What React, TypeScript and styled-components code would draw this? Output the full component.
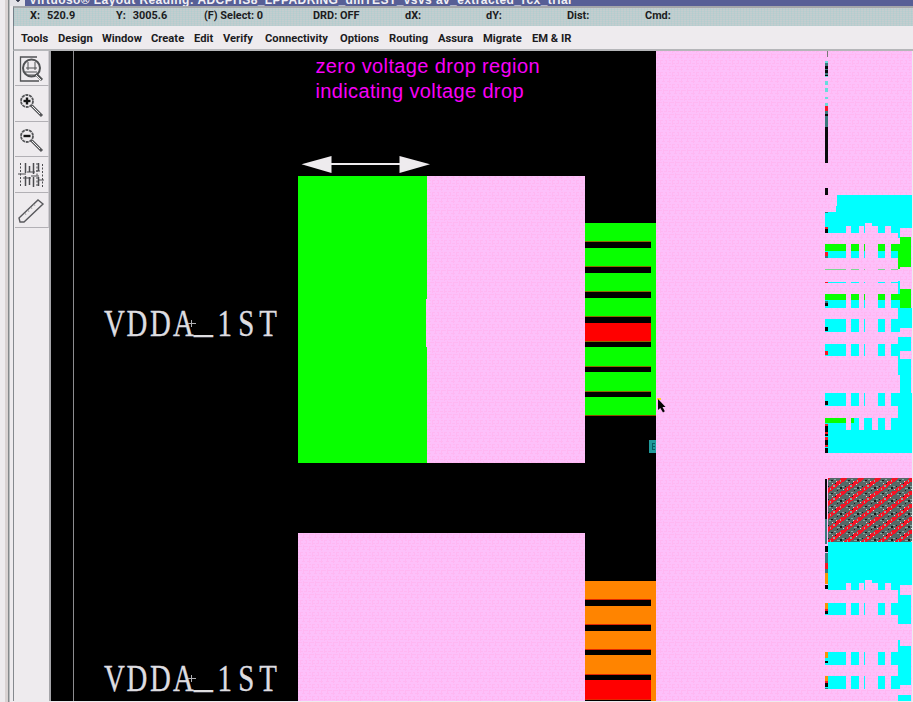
import React from 'react';
import styled, { createGlobalStyle } from 'styled-components';

const GlobalStyle = createGlobalStyle`
  body { margin: 0; background: #eeebee; overflow: hidden; }
  * { box-sizing: border-box; }
`;

const Frame = styled.div`
  display: grid;
  grid-template-columns: 5px 5px 1fr;
  width: 913px;
  height: 702px;
  background: #eeebee;
  font-family: Roboto, 'Liberation Sans', Arial, sans-serif;
  color: #1c1c1e;
`;

const DesktopEdge = styled.div`
  background: #eeebee;
`;

const WindowBorder = styled.div`
  background: linear-gradient(90deg, #d9d2d2 0 3px, #85898c 3px 4px, #b9bcbe 4px 5px);
`;

const Window = styled.div`
  display: flex;
  flex-direction: column;
  min-width: 0;
  height: 701px;
`;

const TitleBar = styled.div`
  display: flex;
  align-items: flex-end;
  height: 6px;
  overflow: hidden;
  background: #575f96;
  color: #f1f0f5;
`;

const WindowMenuButton = styled.div`
  width: 15px;
  height: 6px;
  background: radial-gradient(circle at 8px 0, #33374a 0 1.5px, #e2e1e7 2px);
`;

const Title = styled.div`
  margin-left: 4px;
  font-family: 'Liberation Sans', Arial, sans-serif;
  font-size: 12px;
  font-weight: 700;
  line-height: 12px;
  letter-spacing: 0.42px;
  white-space: pre;
`;

const StatusBar = styled.div`
  display: flex;
  height: 20px;
  padding-left: 16px;
  margin-left: 3px;
  border-top: 2px solid #a4a7aa;
  border-left: 1px solid #77808a;
  background:
    repeating-linear-gradient(90deg, rgba(150, 205, 205, 0.25) 0 1px, transparent 1px 3px),
    repeating-linear-gradient(0deg, rgba(150, 205, 205, 0.2) 0 1px, transparent 1px 2px),
    #c5cdcf;
`;

const StatusField = styled.div<{ $width: number }>`
  display: flex;
  gap: 7px;
  width: ${(p) => p.$width}px;
  flex: none;
  font-size: 10.9px;
  font-weight: 700;
  line-height: 16px;
  white-space: pre;
`;

const MenuBar = styled.div`
  display: flex;
  height: 25px;
  margin-left: 3px;
  padding-left: 7px;
  border-left: 1px solid #85898e;
  border-bottom: 2px solid #b5b6b9;
`;

const MenuItem = styled.div<{ $width: number }>`
  width: ${(p) => p.$width}px;
  flex: none;
  font-size: 11.2px;
  font-weight: 700;
  line-height: 25px;
  white-space: nowrap;
`;

const Workspace = styled.div`
  display: flex;
  flex: 1;
  min-height: 0;
`;

const Toolbar = styled.div`
  display: flex;
  flex-direction: column;
  width: 38px;
  margin-left: 3px;
  border-left: 1px solid #85898e;
  border-right: 2px solid #a5a5a9;
`;

const ToolButton = styled.div`
  display: flex;
  align-items: center;
  justify-content: center;
  height: 35.4px;
  margin-left: 1px;
  padding-right: 2px;
  padding-top: 2px;
  border-bottom: 1px solid #b2b0b5;
  border-right: 1px solid #cfccd1;
`;

const Canvas = styled.svg`
  display: block;
  width: 861px;
  height: 650px;
`;

const Caption = styled.text`
  font: 20px 'Liberation Sans', Arial, sans-serif;
  fill: #f800f8;
`;

const NetLabel = styled.text`
  font: 37px 'Liberation Serif', 'Times New Roman', serif;
  fill: #dedde0;
  stroke: #dedde0;
  stroke-width: 0.35px;
`;

const PINK = 'url(#metal)';
const CYAN = '#00ffff';
const GREEN = '#08ff00';

const status: { parts: string[]; width: number }[] = [
  { parts: ['X:', '520.9'], width: 86 },
  { parts: ['Y:', '3005.6'], width: 88 },
  { parts: ['(F) Select: 0'], width: 109 },
  { parts: ['DRD: OFF'], width: 92 },
  { parts: ['dX:'], width: 81 },
  { parts: ['dY:'], width: 81 },
  { parts: ['Dist:'], width: 78 },
  { parts: ['Cmd:'], width: 80 },
];

const menus: [string, number][] = [
  ['Tools', 37], ['Design', 44], ['Window', 49], ['Create', 43], ['Edit', 29], ['Verify', 42],
  ['Connectivity', 75], ['Options', 49], ['Routing', 49], ['Assura', 45], ['Migrate', 49], ['EM & IR', 60],
];

type Box = [number, number, number, number];

const Boxes = ({ items, fill }: { items: Box[]; fill: string }) => (
  <g fill={fill}>
    {items.map(([x1, y1, x2, y2], i) => (
      <rect key={i} x={x1} y={y1} width={x2 - x1} height={y2 - y1} />
    ))}
  </g>
);

const rowColumns: [number, number][] = [[825, 846], [851, 859], [864, 865], [878, 885], [891, 898]];
const row = (y1: number, y2: number): Box[] => rowColumns.map(([a, b]) => [a, y1, b, y2]);

const Comb = ({ y }: { y: number }) => (
  <Boxes
    fill={PINK}
    items={[
      [846, y - 7, 851, y], [859, y - 7, 864, y], [865, y - 10, 872, y], [872, y - 7, 878, y],
      [885, y - 7, 891, y], [900, y - 5, 912, y + 4],
    ]}
  />
);

const NetName = ({ y }: { y: number }) => (
  <g>
    <NetLabel transform={`translate(104 ${y}) scale(.78 1)`}>
      <tspan x="0">V</tspan>
      <tspan x="29">D</tspan>
      <tspan x="59">D</tspan>
      <tspan x="88.5">A</tspan>
      <tspan x="115.5" dy="-4" textLength="24" lengthAdjust="spacingAndGlyphs">_</tspan>
      <tspan x="145.5" dy="4">1</tspan>
      <tspan x="172">S</tspan>
      <tspan x="199">T</tspan>
    </NetLabel>
    <path d={`M188 ${y - 12.5}h8M191.5 ${y - 16}v7`} stroke="#b0b0b4" fill="none" />
  </g>
);

const ViaStack = ({ y, fill, edge, bars, bottom }: { y: number; fill: string; edge: string; bars: number[]; bottom: number }) => (
  <g>
    <rect x="585" y={y} width="71" height={bottom - y} fill={fill} />
    <rect x="585" y={y + 99} width="66" height="20" fill="#ff0000" />
    {bars.map((b) => (
      <g key={b}>
        <rect x="585" y={b - 1} width="66" height="1" fill={edge} />
        <rect x="585" y={b} width="66" height="5.5" fill="#000" />
      </g>
    ))}
  </g>
);

const LayoutCanvas = () => (
  <Canvas viewBox="51 51 861 650" shapeRendering="crispEdges">
    <defs>
      <pattern id="metal" width="12" height="12" patternUnits="userSpaceOnUse">
        <rect width="12" height="12" fill="#fdc0fa" />
        <path
          d="M0 .5h3M5 .5h2M9 .5h2M1 3.5h2M4 3.5h3M8 3.5h3M0 6.5h2M4 6.5h4M10 6.5h2M2 9.5h3M7 9.5h4M.5 1v4M3.5 5v4M6.5 0v3M9.5 6v5"
          stroke="#ffb5f0"
          strokeOpacity=".8"
        />
      </pattern>
      <pattern id="hatch" width="17" height="13" patternUnits="userSpaceOnUse" x="828" y="478">
        <rect width="17" height="13" fill="#566866" />
        <path d="M-17 13L0 0M0 13L17 0M17 13L34 0M-17 26L17 0M0 0L17 -13" stroke="#f41426" strokeWidth="3.8" />
        <path d="M1 3h2v1h-2zM5 7h2v2h-2zM9 10h3v1h-3zM12 2h1v2h-1zM14 8h2v1h-2zM6 1h2v1h-2zM2 10h1v2h-1z" fill="#80aaa2" />
        <path d="M4 5h1v1h-1zM11 6h1v1h-1zM15 11h1v1h-1zM8 3h1v1h-1z" fill="#d9d6d8" />
        <path d="M3 2h2v1h-2zM7 5h1v1h-1zM12 9h2v2h-2zM0 8h1v1h-1zM9 12h1v1h-1z" fill="#171a1b" />
      </pattern>
    </defs>

    <rect x="51" y="51" width="861" height="650" fill="#000" />
    <rect x="73" y="51" width="1" height="650" fill="#8c8c8f" />

    <Caption x="315.5" y="72.5" textLength="224">zero voltage drop region</Caption>
    <Caption x="315.5" y="97.5" textLength="208">indicating voltage drop</Caption>

    <g fill="#eeebee" shapeRendering="auto">
      <rect x="325" y="163" width="80" height="2" />
      <path d="M301.5 164.3L331.5 156v17zM430 164.3L399.5 156v17z" />
    </g>

    <Boxes fill={PINK} items={[[298, 176, 585, 463], [298, 533, 585, 701], [656, 51, 912, 701]]} />
    <path d="M298 176H427V299h-1V347h1V463H298z" fill={GREEN} />

    <NetName y={336} />
    <NetName y={690.5} />

    <ViaStack y={223} bottom={415} fill={GREEN} edge="#8a6a00" bars={[242, 267, 292, 317, 341.5, 366.5, 391.5]} />
    <rect x="585" y="415" width="71" height="1" fill="#8a4a00" />
    <ViaStack y={581} bottom={701} fill="#ff8400" edge="#e22800" bars={[600, 625, 649.5, 674.5, 699.5]} />

    <rect x="649" y="440" width="7" height="13" fill="#209a9c" />
    <path d="M655 443h-3v6h3M652 446h3" stroke="#085c62" fill="none" />
    <rect x="657" y="398" width="4" height="2" fill="#ffd52e" />
    <path d="M658 399V410L660.3 408L663 412.5L664.8 411.3L662.5 407H665.5z" fill="#050505" shapeRendering="auto" />

    {/* Upper ring cell */}
    <path d="M837 195H912V233H825V212H836V206H837z" fill={CYAN} />
    <Comb y={233} />
    <Boxes fill={PINK} items={[[898, 228, 900, 233]]} />
    <Boxes
      fill={CYAN}
      items={[
        [898, 228, 900, 238], ...row(251, 258), ...row(282, 283), ...row(300, 307.5), ...row(318.5, 332),
        ...row(343.5, 356), ...row(393, 405.5), [898, 281, 900, 308], [898, 308, 912, 328],
        [898, 328, 900, 332], [898, 337, 911, 351], [898, 351, 900, 359], [898, 359, 911, 375],
        [900, 375, 911, 393], [898, 393, 912, 418], [825, 418, 912, 453],
      ]}
    />
    <Boxes
      fill={GREEN}
      items={[
        ...row(244, 251), ...row(293.5, 300), [898, 244, 900, 251], [900, 237, 911, 267],
        [898, 251, 900, 269], [900, 289, 911, 308], [898, 294, 900, 300], [825, 418, 846, 423], [851, 418, 854, 423],
      ]}
    />
    <Boxes fill="#78d990" items={row(269, 270)} />
    <Boxes fill={PINK} items={[[846, 418, 851, 430], [859, 418, 864, 430], [872, 418, 878, 430], [885, 418, 891, 430]]} />

    {/* Lower ring cell */}
    <rect x="828" y="478" width="84" height="64" fill="url(#hatch)" />
    <rect x="828" y="542" width="84" height="48" fill={CYAN} />
    <Comb y={590} />
    <Boxes
      fill={CYAN}
      items={[
        ...row(602.5, 614.5), ...row(652, 664.5), ...row(676, 689), ...row(700.5, 701),
        [898, 590, 900, 595], [898, 595, 911, 624], [898, 640, 900, 646], [898, 646, 911, 685],
        [898, 685, 900, 689], [898, 695, 911, 701],
      ]}
    />

    {/* Narrow routing strip on the cell boundary */}
    <Boxes
      fill="#080a0b"
      items={[
        [825, 127, 828, 163], [825, 188, 828, 195], [825, 66, 828, 69], [825, 70, 828, 73], [825, 75, 828, 76],
        [825, 114, 828, 116], [825, 229, 828, 233], [825, 303, 828, 306], [825, 327, 828, 331],
        [825, 401, 828, 405], [825, 425, 828, 432], [825, 434, 828, 436], [825, 440, 828, 445],
        [825, 448, 828, 453], [825, 479, 827, 520], [825, 546, 828, 552], [825, 585, 828, 589],
        [825, 611, 828, 614], [825, 661, 828, 663], [825, 683, 828, 687],
      ]}
    />
    <Boxes
      fill="#39797c"
      items={[
        [825, 63, 828, 66], [825, 69, 828, 70], [825, 73, 828, 75], [825, 111, 828, 114], [825, 116, 828, 127],
        [825, 212, 828, 213], [825, 256, 828, 258], [825, 301, 828, 303], [825, 519, 827, 544], [825, 553, 828, 563],
        [825, 567, 828, 573], [825, 688, 828, 689],
      ]}
    />
    <Boxes
      fill="#67dcdc"
      items={[[825, 61, 828, 63], [825, 76, 828, 77], [825, 81, 828, 85], [825, 88, 828, 92], [825, 97, 828, 99], [825, 103, 828, 106]]}
    />
    <Boxes
      fill="#f61624"
      items={[
        [825, 106, 828, 111], [825, 227, 828, 229], [825, 252, 828, 256], [825, 282, 828, 283], [825, 351, 828, 355],
        [825, 424, 828, 426], [825, 432, 828, 434], [825, 437, 828, 440], [825, 445, 828, 447], [825, 563, 828, 569],
        [825, 609, 828, 611], [825, 681, 828, 683],
      ]}
    />
    <Boxes fill="#f79208" items={[[825, 573, 828, 584], [825, 603, 828, 609], [825, 652, 828, 658], [825, 676, 828, 681]]} />
    <rect x="827" y="51" width="1" height="6" fill="#777" />
  </Canvas>
);

const Magnifier = ({ zoomIn }: { zoomIn?: boolean }) => (
  <svg width="26" height="26" viewBox="0 0 26 26" fill="none" stroke="#555659">
    <circle cx="9" cy="9" r="6" strokeWidth="1.8" strokeDasharray="3 .7" />
    <path d="M5.5 9h7" stroke="#151515" strokeWidth="2.4" />
    {zoomIn && <path d="M9 5.5v7" stroke="#151515" strokeWidth="2.4" />}
    <path d="M13.5 13.5L24 24" strokeWidth="3" />
    <path d="M14 14L22 22" stroke="#eee" />
  </svg>
);

const FitIcon = () => (
  <svg width="26" height="28" viewBox="0 0 26 28" fill="none" stroke="#505254">
    <path d="M19 2H2.5V26H21" strokeWidth="1.3" />
    <circle cx="13.5" cy="13" r="8.5" strokeWidth="2" />
    <path d="M10 7v8M17 7v8M8 13h11M7 17h12M10 20h8" />
    <path d="M18 19l6 6" strokeWidth="3" />
    <path d="M18 20l5 5" stroke="#eee" />
  </svg>
);

const StretchIcon = () => (
  <svg width="28" height="26" viewBox="0 0 28 26" fill="none" stroke="#4c4c50">
    <path d="M3.5 1v24M20 1v24M25.5 2v23" strokeDasharray="2 1.5" />
    <path d="M8.5 1v10M8.5 14v10M12.5 4v6M12.5 15v8M16.5 1v11M16.5 15v10M21.5 1v8M21.5 15v9" strokeWidth="1.5" />
    <path d="M1 12h8M10 10h8M6 16h8M14 14h8M19 9h4M22 18h5" />
  </svg>
);

const RulerIcon = () => (
  <svg width="28" height="28" viewBox="0 0 28 28" fill="none" stroke="#59595d">
    <path d="M2 21L21 3L26 7L7 25H3z" strokeWidth="1.4" />
    <path d="M8 16l1 2M11 13l1 2M14 10l1 2M17 7l1 2" stroke="#aaa" />
  </svg>
);

export default function App() {
  return (
    <>
      <GlobalStyle />
      <Frame>
        <DesktopEdge />
        <WindowBorder />
        <Window>
          <TitleBar>
            <WindowMenuButton />
            <Title>Virtuoso® Layout Reading: ADCPHS8_LPPADRING_dmTEST_vsvs av_extracted_rcx_trial</Title>
          </TitleBar>
          <StatusBar>
            {status.map(({ parts, width }) => (
              <StatusField key={parts[0]} $width={width}>
                {parts.map((part) => (
                  <span key={part}>{part}</span>
                ))}
              </StatusField>
            ))}
          </StatusBar>
          <MenuBar>
            {menus.map(([label, width]) => (
              <MenuItem key={label} $width={width}>{label}</MenuItem>
            ))}
          </MenuBar>
          <Workspace>
            <Toolbar>
              <ToolButton><FitIcon /></ToolButton>
              <ToolButton><Magnifier zoomIn /></ToolButton>
              <ToolButton><Magnifier /></ToolButton>
              <ToolButton><StretchIcon /></ToolButton>
              <ToolButton><RulerIcon /></ToolButton>
            </Toolbar>
            <LayoutCanvas />
          </Workspace>
        </Window>
      </Frame>
    </>
  );
}
